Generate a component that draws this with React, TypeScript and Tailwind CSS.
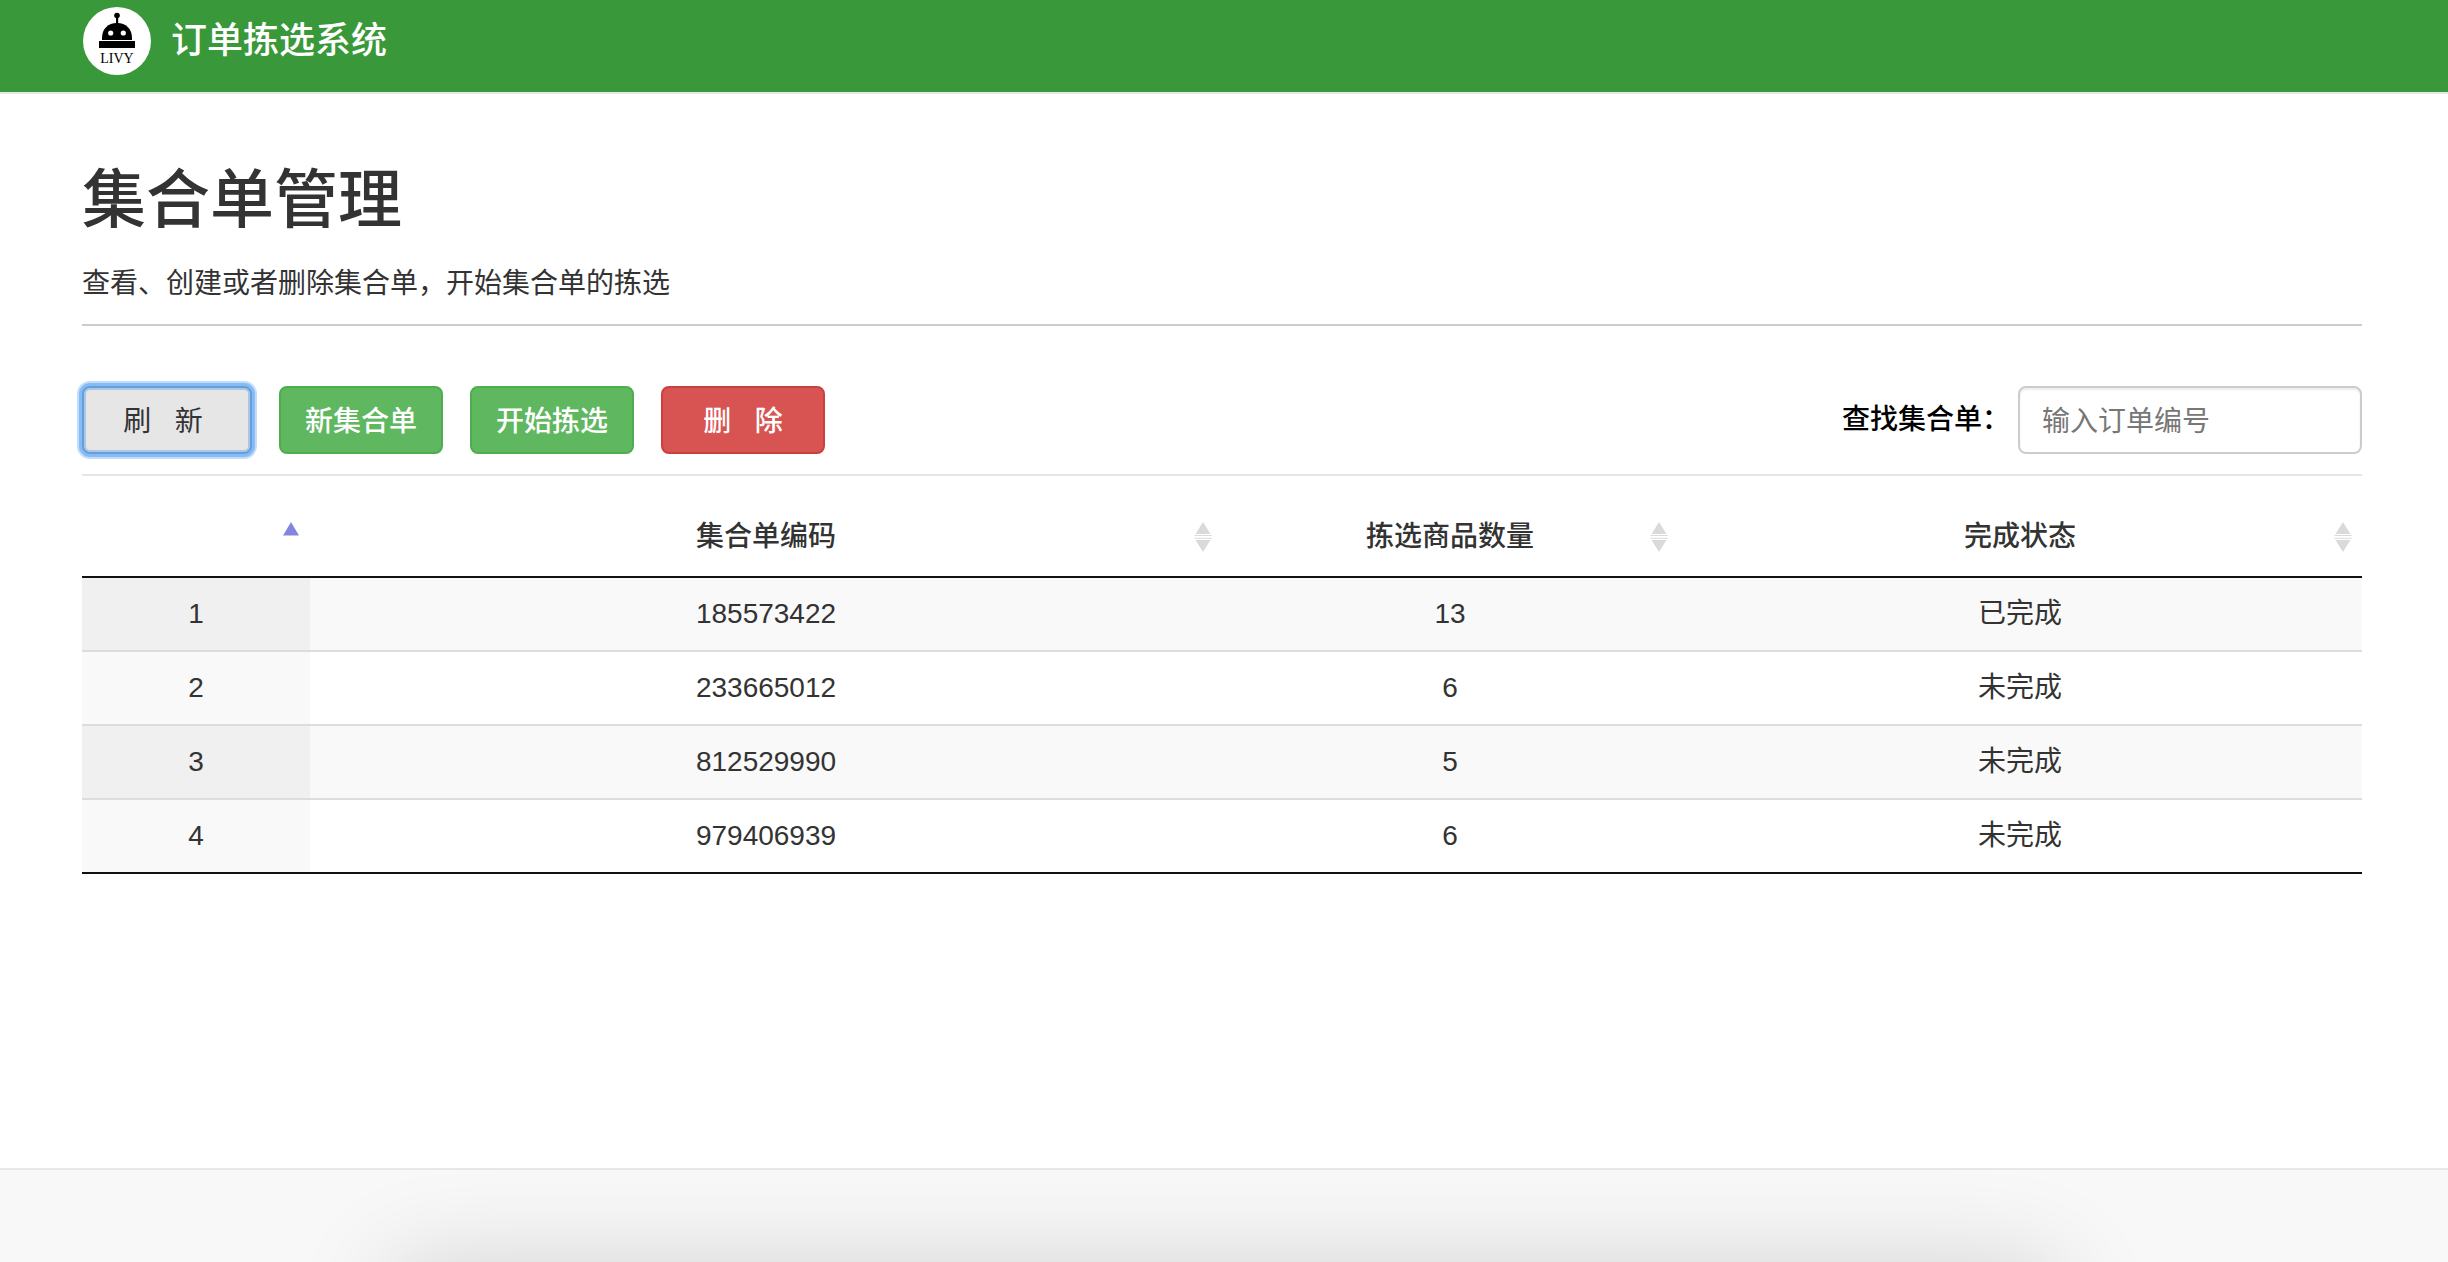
type SortState = "asc" | "none";

const columns: { label: string; width: string; sort: SortState }[] = [
  { label: "", width: "w-[10%]", sort: "asc" },
  { label: "集合单编码", width: "w-[40%]", sort: "none" },
  { label: "拣选商品数量", width: "w-[20%]", sort: "none" },
  { label: "完成状态", width: "w-[30%]", sort: "none" },
];

const rows = [
  { id: 1, code: "185573422", count: 13, status: "已完成" },
  { id: 2, code: "233665012", count: 6, status: "未完成" },
  { id: 3, code: "812529990", count: 5, status: "未完成" },
  { id: 4, code: "979406939", count: 6, status: "未完成" },
];

function Logo() {
  return (
    <svg viewBox="0 0 68 68" className="size-[68px]" role="img" aria-label="LIVY">
      <circle cx="34" cy="34" r="34" fill="#fff" />
      <circle cx="34" cy="8.5" r="2.8" fill="#000" />
      <rect x="33" y="9" width="2.2" height="9" fill="#000" />
      <path d="M19 33V31C19 22 25 16 34 16S49 22 49 31V33Z" fill="#000" />
      <rect x="16" y="34" width="36" height="7" fill="#000" />
      <circle cx="27.7" cy="26" r="2.6" fill="#fff" />
      <circle cx="40.3" cy="26" r="2.6" fill="#fff" />
      <text
        x="34"
        y="56"
        textAnchor="middle"
        fontSize="14"
        fill="#000"
        className="font-['Liberation_Serif',serif]"
      >
        LIVY
      </text>
    </svg>
  );
}

function SortIcon({ sort }: { sort: SortState }) {
  return (
    <svg
      viewBox="0 0 18 30"
      className="absolute top-[46px] right-[10px] h-[30px] w-[18px]"
      aria-hidden="true"
    >
      {sort === "asc" ? (
        <path d="M9 0L17 13.5H1Z" fill="#8386dc" />
      ) : (
        <g fill="#dadada">
          <path d="M9 0L16.5 12H1.5Z" />
          <path d="M0.5 13H17.5V14H0.5Z" />
          <path d="M0.5 15.8H17.5V16.8H0.5Z" />
          <path d="M9 30L16.5 18H1.5Z" />
        </g>
      )}
    </svg>
  );
}

const button =
  "h-[68px] rounded-[8px] border-2 pt-1 text-[28px] leading-[40px] whitespace-pre text-center";
const solid = "w-[164px] font-medium text-white";

export default function App() {
  return (
    <div className="flex min-h-screen flex-col bg-white font-['Liberation_Sans','Noto_Sans_CJK_SC',sans-serif] text-[28px] leading-[40px] text-[#333]">
      <header className="flex h-[94px] items-start border-b-2 border-[#e7e7e7] bg-[#399839] pt-[7px] pr-[86px] pl-[83px]">
        <a href="#" className="flex items-center gap-5 text-[36px] font-medium text-white">
          <Logo />
          订单拣选系统
        </a>
      </header>

      <main className="grow pr-[86px] pl-[82px]">
        <h1 className="pt-16 text-[64px] leading-[84px] font-medium">集合单管理</h1>
        <p className="pt-[22px] pb-5">查看、创建或者删除集合单，开始集合单的拣选</p>
        <hr className="border-t-2 border-[#ccc]" />

        <div className="flex items-center justify-between border-b-2 border-[#e5e5e5] pt-[60px] pb-5">
          <div className="flex gap-[27px]">
            <button
              type="button"
              className={`${button} w-[170px] border-[#639fdc] bg-[#e6e6e6] pr-2 text-[#333] shadow-[inset_0_0_0_2px_#adc6e4,0_0_0_3px_#86bbf5,0_0_0_5px_#c2dcfa] outline-none`}
            >
              {"刷   新"}
            </button>
            <button type="button" className={`${button} ${solid} border-[#4cae4c] bg-[#5fb760]`}>
              新集合单
            </button>
            <button type="button" className={`${button} ${solid} border-[#4cae4c] bg-[#5fb760]`}>
              开始拣选
            </button>
            <button type="button" className={`${button} ${solid} border-[#cc3f3d] bg-[#d75452]`}>
              {"删   除"}
            </button>
          </div>
          <div className="flex items-center gap-2">
            <label htmlFor="search" className="font-medium text-black">
              查找集合单：
            </label>
            <input
              id="search"
              type="text"
              placeholder="输入订单编号"
              className="h-[68px] w-[344px] rounded-[8px] border-2 border-[#ccc] bg-white px-[22px] pt-1 shadow-[inset_0_2px_2px_rgba(0,0,0,0.075)] placeholder:text-[#777]"
            />
          </div>
        </div>

        <table className="w-full table-fixed border-separate border-spacing-0 border-b-2 border-[#111] text-center">
          <thead>
            <tr>
              {columns.map((c, i) => (
                <th
                  key={i}
                  scope="col"
                  aria-sort={c.sort === "asc" ? "ascending" : "none"}
                  className={`${c.width} relative h-[102px] border-b-2 border-[#111] pt-[22px] font-medium`}
                >
                  {c.label}
                  <SortIcon sort={c.sort} />
                </th>
              ))}
            </tr>
          </thead>
          <tbody className="[&>tr:not(:first-child)>td]:border-t-2 [&>tr:not(:first-child)>td]:border-[#ddd]">
            {rows.map((r) => (
              <tr key={r.id} className="odd:bg-[#f9f9f9] [&>td]:py-4">
                <td className={r.id % 2 ? "bg-[#f0f0f0]" : "bg-[#f9f9f9]"}>{r.id}</td>
                <td>{r.code}</td>
                <td>{r.count}</td>
                <td>{r.status}</td>
              </tr>
            ))}
          </tbody>
        </table>
      </main>

      <footer className="relative h-[94px] overflow-hidden border-t-2 border-[#e7e7e7] bg-[#f8f8f8]">
        <div className="absolute inset-x-[16%] top-full h-48 shadow-[0_4px_100px_rgba(0,0,0,0.16)]" />
      </footer>
    </div>
  );
}
